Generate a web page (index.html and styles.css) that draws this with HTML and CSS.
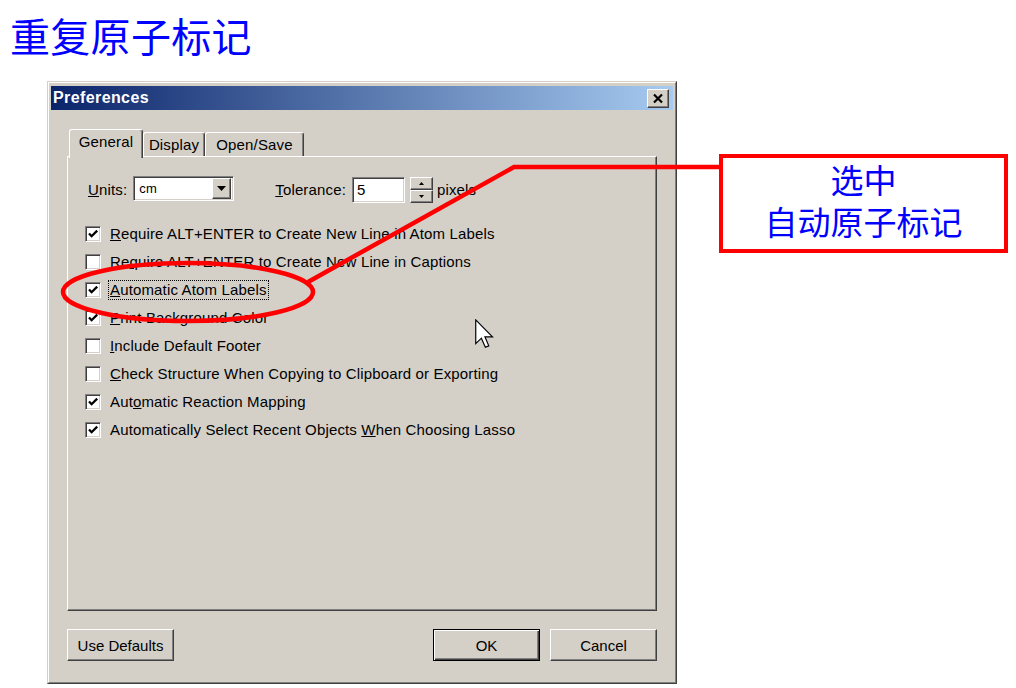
FILE: index.html
```html
<!DOCTYPE html>
<html lang="zh">
<head>
<meta charset="utf-8">
<title>重复原子标记</title>
<link rel="stylesheet" href="styles.css">
</head>
<body>
<h1 class="title">重复原子标记</h1>
<div class="dialog">
  <div class="frame">
    <div class="titlebar">
      <span class="caption">Preferences</span>
      <span class="close raised">
        <svg width="12" height="11" viewBox="0 0 12 11"><path d="M2 1.5 L10 9.5 M10 1.5 L2 9.5" stroke="#000" stroke-width="2.2" fill="none"/></svg>
      </span>
    </div>
    <div class="dbody">
      <div class="tabs">
        <div class="tab tab-general active">General</div>
        <div class="tab tab-display">Display</div>
        <div class="tab tab-open">Open/Save</div>
      </div>
      <div class="panel">
        <div class="units-row">
          <span class="lbl units-lbl"><u>U</u>nits:</span>
          <div class="combo sunken">
            <span class="combo-val">cm</span>
            <span class="combo-btn raised">
              <svg width="9" height="5" viewBox="0 0 9 5"><path d="M0 0 H9 L4.5 5 Z" fill="#000"/></svg>
            </span>
          </div>
          <span class="lbl tol-lbl"><u>T</u>olerance:</span>
          <div class="field sunken">5</div>
          <div class="spin">
            <span class="spin-btn raised"><svg width="5" height="3" viewBox="0 0 5 3"><path d="M0 3 H5 L2.5 0 Z" fill="#000"/></svg></span>
            <span class="spin-btn raised"><svg width="5" height="3" viewBox="0 0 5 3"><path d="M0 0 H5 L2.5 3 Z" fill="#000"/></svg></span>
          </div>
          <span class="lbl px-lbl">pixels</span>
        </div>
        <ul class="checks">
          <li class="row"><span class="cb sunken"><svg class="tick" viewBox="0 0 12 12"><path d="M2 5.5 L4.6 8.2 L10.2 2.6" stroke="#000" stroke-width="2.3" fill="none"/></svg></span><span class="txt"><u>R</u>equire ALT+ENTER to Create New Line in Atom Labels</span></li>
          <li class="row"><span class="cb sunken"></span><span class="txt">Re<u>q</u>uire ALT+ENTER to Create New Line in Captions</span></li>
          <li class="row"><span class="cb sunken"><svg class="tick" viewBox="0 0 12 12"><path d="M2 5.5 L4.6 8.2 L10.2 2.6" stroke="#000" stroke-width="2.3" fill="none"/></svg></span><span class="txt focus"><u>A</u>utomatic Atom Labels</span></li>
          <li class="row"><span class="cb sunken"><svg class="tick" viewBox="0 0 12 12"><path d="M2 5.5 L4.6 8.2 L10.2 2.6" stroke="#000" stroke-width="2.3" fill="none"/></svg></span><span class="txt"><u>P</u>rint Background Color</span></li>
          <li class="row"><span class="cb sunken"></span><span class="txt"><u>I</u>nclude Default Footer</span></li>
          <li class="row"><span class="cb sunken"></span><span class="txt"><u>C</u>heck Structure When Copying to Clipboard or Exporting</span></li>
          <li class="row"><span class="cb sunken"><svg class="tick" viewBox="0 0 12 12"><path d="M2 5.5 L4.6 8.2 L10.2 2.6" stroke="#000" stroke-width="2.3" fill="none"/></svg></span><span class="txt">Aut<u>o</u>matic Reaction Mapping</span></li>
          <li class="row"><span class="cb sunken"><svg class="tick" viewBox="0 0 12 12"><path d="M2 5.5 L4.6 8.2 L10.2 2.6" stroke="#000" stroke-width="2.3" fill="none"/></svg></span><span class="txt">Automatically Select Recent Objects <u>W</u>hen Choosing Lasso</span></li>
        </ul>
      </div>
      <div class="buttons">
        <button class="btn raised">Use Defaults</button>
        <button class="btn default ok">OK</button>
        <button class="btn raised">Cancel</button>
      </div>
    </div>
  </div>
</div>

<svg class="overlay" width="1016" height="688" viewBox="0 0 1016 688">
  <ellipse cx="188" cy="292" rx="125" ry="29" fill="none" stroke="#ff0000" stroke-width="4.5"/>
  <polyline points="308,282 514,167 721,167" fill="none" stroke="#ff0000" stroke-width="4.5"/>
</svg>

<div class="callout">
  <div class="callout-line">选中</div>
  <div class="callout-line">自动原子标记</div>
</div>

<svg class="cursor" width="20" height="30" viewBox="0 0 13.5 20">
  <path d="M0.5 0.5 L0.5 16.5 L4.3 12.8 L7 19 L9.3 18 L6.7 11.9 L11.8 11.9 Z" fill="#fff" stroke="#000" stroke-width="0.8" stroke-linejoin="miter"/>
</svg>
</body>
</html>
```
FILE: styles.css
```css
* { box-sizing: border-box; }
html, body { margin: 0; padding: 0; }
body {
  width: 1016px;
  height: 688px;
  overflow: hidden;
  position: relative;
  background: #fff;
  font-family: "Liberation Sans", Arial, sans-serif;
}
.title {
  margin: 0;
  padding: 14px 0 0 10px;
  height: 56px;
  font: normal 40px/42px "Noto Sans CJK SC", sans-serif;
  color: #0000ff;
  letter-spacing: 0.3px;
}
.dialog {
  margin: 25px 0 0 47px;
  width: 630px;
  height: 603px;
  border: 1px solid;
  border-color: #d4d0c8 #404040 #404040 #d4d0c8;
  background: #d4d0c8;
  letter-spacing: 0.15px;
}
.frame {
  height: 100%;
  border: 1px solid;
  border-color: #fff #808080 #808080 #fff;
  padding: 3px 2px 2px 2px;
  display: flex;
  flex-direction: column;
}
.titlebar {
  height: 24px;
  flex: 0 0 24px;
  background: linear-gradient(to right, #0a246a 0%, #a6caf0 100%);
  display: flex;
  align-items: center;
  justify-content: space-between;
  padding: 0 4px 0 2px;
}
.caption {
  color: #fff;
  font-weight: bold;
  font-size: 16px;
  letter-spacing: 0.4px;
}
.raised {
  background: #d4d0c8;
  border: 1px solid;
  border-color: #fff #404040 #404040 #fff;
  box-shadow: inset -1px -1px 0 #808080, inset 1px 1px 0 #d4d0c8;
}
.sunken {
  background: #fff;
  border: 1px solid;
  border-color: #808080 #fff #fff #808080;
  box-shadow: inset 1px 1px 0 #404040, inset -1px -1px 0 #d4d0c8;
}
.close {
  width: 22px;
  height: 19px;
  display: flex;
  align-items: center;
  justify-content: center;
}
.close svg { display: block; }
.dbody {
  flex: 1;
  padding: 19px 16px 0 16px;
  display: flex;
  flex-direction: column;
}
.tabs {
  display: flex;
  align-items: flex-end;
  height: 27px;
  padding-left: 2px;
  position: relative;
  z-index: 1;
}
.tab {
  height: 24px;
  background: #d4d0c8;
  border-top: 1px solid #fff;
  border-left: 1px solid #fff;
  border-right: 1px solid #404040;
  box-shadow: inset -1px 0 0 #808080;
  border-radius: 3px 3px 0 0;
  font-size: 15px;
  color: #000;
  text-align: center;
  padding-top: 3px;
}
.tab.active {
  height: 29px;
  margin-bottom: -2px;
  padding-top: 3px;
}
.tab-general { width: 74px; }
.tab-display { width: 62px; }
.tab-open { width: 99px; }
.panel {
  flex: 0 0 455px;
  border: 1px solid;
  border-color: #fff #404040 #404040 #fff;
  box-shadow: inset -1px -1px 0 #808080;
  padding: 19px 16px 0 17px;
}
.units-row {
  display: flex;
  align-items: center;
  height: 27px;
  font-size: 15px;
}
.lbl { color: #000; }
.units-lbl { margin-left: 3px; }
.combo {
  margin-left: 6px;
  width: 101px;
  height: 25px;
  display: flex;
  align-items: center;
  justify-content: space-between;
  padding: 2px 2px 2px 5px;
  align-self: flex-start;
}
.combo-val { font-size: 13px; }
.combo-btn {
  width: 19px;
  height: 21px;
  display: flex;
  align-items: center;
  justify-content: center;
}
.combo-btn svg, .spin-btn svg { display: block; }
.tol-lbl { margin-left: 41px; }
.field {
  margin-left: 6px;
  width: 53px;
  height: 26px;
  padding: 3px 0 0 4px;
  font-size: 15px;
  align-self: flex-end;
}
.spin {
  margin-left: 5px;
  width: 23px;
  height: 26px;
  display: flex;
  flex-direction: column;
  align-self: flex-end;
}
.spin-btn {
  flex: 1;
  display: flex;
  align-items: center;
  justify-content: center;
}
.px-lbl { margin-left: 4px; }
.checks {
  list-style: none;
  margin: 17px 0 0 0;
  padding: 0;
}
.row {
  height: 28px;
  display: flex;
  align-items: center;
  font-size: 15px;
  color: #000;
}
.cb {
  width: 16px;
  height: 16px;
  margin-right: 8px;
  display: flex;
  align-items: center;
  justify-content: center;
  flex: 0 0 16px;
}
.tick { width: 12px; height: 12px; display: block; }
.txt { padding: 0 1px; line-height: 18px; }
.focus { outline: 1px dotted #000; outline-offset: 0; }
.buttons {
  margin-top: 18px;
  display: flex;
  height: 32px;
}
.btn {
  width: 107px;
  height: 32px;
  font-family: "Liberation Sans", Arial, sans-serif;
  font-size: 15px;
  color: #000;
  padding: 0;
}
.btn + .btn { margin-left: 10px; }
.btn.ok { margin-left: auto; }
.btn.default {
  background: #d4d0c8;
  border: 1px solid #000;
  box-shadow: inset 1px 1px 0 #fff, inset -1px -1px 0 #404040, inset -2px -2px 0 #808080;
}
.overlay {
  position: absolute;
  left: 0;
  top: 0;
  pointer-events: none;
}
.callout {
  position: absolute;
  left: 719px;
  top: 154px;
  width: 289px;
  height: 99px;
  border: 4px solid #ff0000;
  background: #fff;
  color: #0000ff;
  text-align: center;
  padding-top: 0;
}
.callout-line {
  height: 42px;
  font: normal 33px/42px "Noto Sans CJK SC", sans-serif;
}
.cursor {
  position: absolute;
  left: 475px;
  top: 319px;
}
```
